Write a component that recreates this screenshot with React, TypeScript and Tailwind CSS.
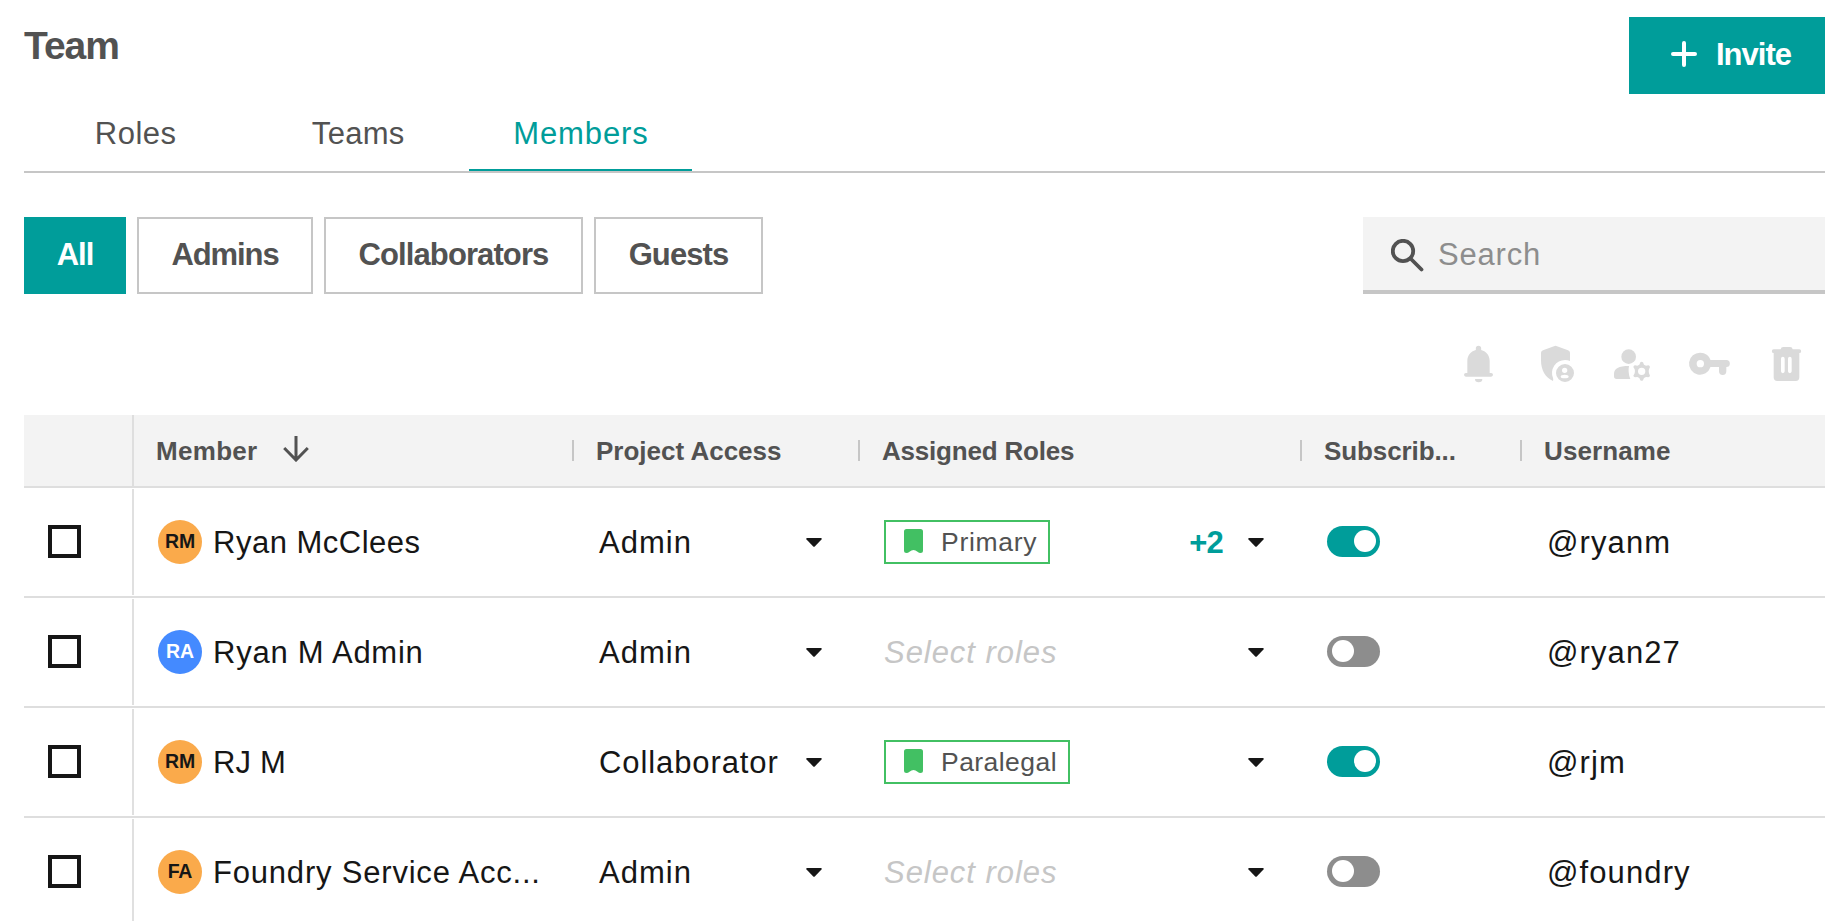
import type { ReactNode } from "react";

type Member = {
  initials: string;
  avatar: string;
  name: string;
  nameSpacing: string;
  access: string;
  accessSpacing: string;
  role?: string;
  roleClass?: string;
  more?: string;
  subscribed: boolean;
  username: string;
};

const members: Member[] = [
  { initials: "RM", avatar: "bg-[#faaa4b] text-[#161616]", name: "Ryan McClees", nameSpacing: "tracking-[0.5px]", access: "Admin", accessSpacing: "tracking-[1px]", role: "Primary", roleClass: "w-[166px] tracking-[0.7px]", more: "+2", subscribed: true, username: "@ryanm" },
  { initials: "RA", avatar: "bg-[#448aff] text-white", name: "Ryan M Admin", nameSpacing: "tracking-[0.75px]", access: "Admin", accessSpacing: "tracking-[1px]", subscribed: false, username: "@ryan27" },
  { initials: "RM", avatar: "bg-[#faaa4b] text-[#161616]", name: "RJ M", nameSpacing: "tracking-[0.2px]", access: "Collaborator", accessSpacing: "tracking-[0.9px]", role: "Paralegal", roleClass: "w-[186px] tracking-[0.45px]", subscribed: true, username: "@rjm" },
  { initials: "FA", avatar: "bg-[#faaa4b] text-[#161616]", name: "Foundry Service Acc...", nameSpacing: "tracking-[0.8px]", access: "Admin", accessSpacing: "tracking-[1px]", subscribed: false, username: "@foundry" },
];

const columns = "grid grid-cols-[110px_438px_286px_442px_220px_305px]";

function ToolIcon({ children }: { children: ReactNode }) {
  return (
    <svg viewBox="0 0 231 210" className="h-[70px] w-[77px]" fill="#dadada">
      {children}
    </svg>
  );
}

function Toolbar() {
  return (
    <div className="flex h-[70px] justify-end">
      <ToolIcon>
        <path d="M115.500 47a8 8 0 0 1 8 8v5c16 4 25.500 17 25.500 33v36h4.500a5.500 5.500 0 0 1 0 11h-76a5.500 5.500 0 0 1 0-11H82V93c0-16 9.500-29 25.500-33v-5a8 8 0 0 1 8-8z" />
        <path d="M105 147h22a11 10 0 0 1-22 0z" />
      </ToolIcon>
      <ToolIcon>
        <path d="M111 48.500q4.500-2 9 0l33 12q6 2.500 6 8V93q-6-3-15-3a39 39 0 0 0-36 54q1.500 5 0 9c-22-9-36-32-36-62V68.500q0-5.500 6-8z" />
        <path fillRule="evenodd" d="M144 102a27 27 0 1 0 0 54 27 27 0 0 0 0-54zM143 113a8 8 0 1 1 0 16 8 8 0 0 1 0-16zM143 134.500c7 0 12 2.500 12 5.500s-5 5-12 5-12-2-12-5 5-5.500 12-5.500z" />
      </ToolIcon>
      <ToolIcon>
        <circle cx="104" cy="80" r="22" />
        <path d="M60 132c0-16 14-24 45-24q-4 19 4 39H68q-8 0-8-8z" />
        <path
          fillRule="evenodd"
          d="M139 97q4-3 8 0l3 7 6 3 7-1q4 1 5 5l-3 7q-2 6 0 12l3 7q-1 4-5 5l-7-1-6 3-3 7q-4 3-8 0l-3-7-6-3-7 1q-4-1-5-5l4-7q2-6 0-12l-4-7q1-4 5-5l7 1 6-3zM143 113a11 11 0 1 0 0 22 11 11 0 0 0 0-22z"
        />
      </ToolIcon>
      <ToolIcon>
        <path fillRule="evenodd" d="M88 68c15 0 26 9 30.500 22H166a10.500 10.500 0 0 1 0 21v13a11 11 0 0 1-22 0v-13h-25.500A33 33 0 1 1 88 68zM88 90a11 11 0 1 0 0 22 11 11 0 0 0 0-22z" />
      </ToolIcon>
      <ToolIcon>
        <path fillRule="evenodd" d="M98 58q1-7 8-7h20q7 0 8 7h20a5.500 5.500 0 0 1 0 11v73q0 11-11 11H88q-11 0-11-11V69a5.500 5.500 0 0 1 0-11zM99 86v38a5.500 5.500 0 0 0 11 0V86a5.500 5.500 0 0 0-11 0zM120 86v38a5.500 5.500 0 0 0 11 0V86a5.500 5.500 0 0 0-11 0z" />
      </ToolIcon>
    </div>
  );
}

function Caret() {
  return (
    <svg viewBox="0 0 16 9" className="mt-px h-[9px] w-4 shrink-0" fill="#161616">
      <path d="M1.200 0h13.600q1.500.2.700 1.400L9 8.300q-1 1-2 0L.5 1.400Q-.3.2 1.200 0z" />
    </svg>
  );
}

function HeaderCell({ children, className }: { children: ReactNode; className: string }) {
  return (
    <div className="flex items-center">
      <span className="h-[21px] w-[2px] bg-[#c6c6c6]" />
      <span className={className}>{children}</span>
    </div>
  );
}

function MemberRow({ m }: { m: Member }) {
  return (
    <div className={`${columns} h-[110px] border-b-2 border-[#dedede] text-[31px] whitespace-nowrap text-[#161616]`}>
      <div className="my-px flex items-center border-r-2 border-[#e0e0e0] pl-6">
        <span className="mb-[2px] h-[33px] w-[33px] border-4 border-[#161616]" />
      </div>
      <div className="flex items-center pl-6">
        <span className={`flex h-11 w-11 items-center justify-center rounded-full pb-px text-[19.500px] font-bold tracking-[-0.2px] ${m.avatar}`}>{m.initials}</span>
        <span className={`pt-[2px] pl-[11px] ${m.nameSpacing}`}>{m.name}</span>
      </div>
      <div className="flex items-center justify-between pr-9 pl-[27px]">
        <span className={`pt-[2px] ${m.accessSpacing}`}>{m.access}</span>
        <Caret />
      </div>
      <div className="flex items-center pr-9 pl-[26px]">
        {m.role ? (
          <span className={`flex h-11 items-center border-2 border-[#42c063] pl-[18px] text-[26.500px] text-[#525252] ${m.roleClass}`}>
            <svg viewBox="0 0 19 24" className="mb-[3px] h-6 w-[19px]" fill="#42c063">
              <path d="M2.500 0h14Q19 0 19 2.500v19q0 2.500-2.500 2.500-1.500 0-3-1.200-2-1.800-4-1.800t-4 1.800Q4 24 2.500 24 0 24 0 21.500v-19Q0 0 2.500 0z" />
            </svg>
            <span className="pt-px pl-[18px]">{m.role}</span>
          </span>
        ) : (
          <span className="pt-[2px] tracking-[0.95px] text-[#c6c6c6] italic">Select roles</span>
        )}
        <span className="ml-auto pt-[2px] pr-[25px] font-bold tracking-[-0.8px] text-[#009d9a]">{m.more}</span>
        <Caret />
      </div>
      <div className="flex items-center pl-[27px]">
        <span className={`mb-[2px] flex h-[31px] w-[53px] items-center rounded-full pr-1 pl-[5px] ${m.subscribed ? "justify-end bg-[#009d9a]" : "justify-start bg-[#8d8d8d]"}`}>
          <span className="h-[22px] w-[22px] rounded-full bg-white" />
        </span>
      </div>
      <div className="flex items-center pl-[27px]">
        <span className="pt-[2px] tracking-[1.1px]">{m.username}</span>
      </div>
    </div>
  );
}

export default function App() {
  return (
    <div className="h-[921px] w-[1847px] overflow-hidden bg-white pr-[22px] pl-6 font-['Liberation_Sans',sans-serif] text-[#525252]">
      <header className="flex h-[94px] items-start justify-between pt-[17px]">
        <h1 className="pt-[6px] text-[39px] leading-[46px] font-bold tracking-[-1px]">Team</h1>
        <button className="flex h-[77px] w-[196px] items-center bg-[#009d9a] pl-[42px] text-[31px] font-bold tracking-[-1px] text-white">
          <svg viewBox="0 0 26 26" className="mb-[3px] h-[26px] w-[26px]" fill="none" stroke="currentColor" strokeWidth="4" strokeLinecap="round">
            <path d="M13 2v22M2 13h22" />
          </svg>
          <span className="pb-px pl-[19px]">Invite</span>
        </button>
      </header>

      <nav className="flex h-[79px] border-b-2 border-[#c6c6c6] text-[31px] leading-[80px]">
        <a className="h-[77px] w-[222.500px] border-b-2 border-transparent pl-px text-center tracking-[0.5px]">Roles</a>
        <a className="h-[77px] w-[222.500px] border-b-2 border-transparent pl-px text-center tracking-[0.3px]">Teams</a>
        <a className="h-[77px] w-[223px] border-b-2 border-[#009d9a] pl-px text-center tracking-[0.9px] text-[#009d9a]">Members</a>
      </nav>

      <div className="mt-11 flex h-[77px] justify-between text-[31px] leading-none">
        <div className="flex gap-[11px] font-bold">
          <button className="w-[102px] bg-[#009d9a] pb-[3px] tracking-[-1px] text-white">All</button>
          <button className="w-44 border-2 border-[#c6c6c6] pb-[3px] tracking-[-1.1px]">Admins</button>
          <button className="w-[259px] border-2 border-[#c6c6c6] pb-[3px] tracking-[-0.9px]">Collaborators</button>
          <button className="w-[169px] border-2 border-[#c6c6c6] pb-[3px] tracking-[-0.9px]">Guests</button>
        </div>
        <div className="flex w-[462px] items-center border-b-4 border-[#c6c6c6] bg-[#f3f3f3] pl-7">
          <svg viewBox="0 0 33 33" className="mt-[4px] h-[33px] w-[33px]" fill="none" stroke="#525252" strokeWidth="3.800" strokeLinecap="round">
            <circle cx="12" cy="12" r="10.200" />
            <path d="m19.500 19.500 11 11" />
          </svg>
          <span className="pt-[2px] pl-[14px] tracking-[0.8px] text-[#8d8d8d]">Search</span>
        </div>
      </div>

      <div className="mt-9">
        <Toolbar />
      </div>

      <div className="mt-[15px]">
        <div className={`${columns} h-[73px] border-b-2 border-[#dedede] bg-[#f3f3f3] text-[26px] leading-none font-bold whitespace-nowrap`}>
          <div className="border-r-2 border-[#dedede]" />
          <div className="flex items-center pl-[22px]">
            <span className="pt-px tracking-[0.3px]">Member</span>
            <svg viewBox="0 0 26 26" className="mb-[3px] ml-[25px] h-[26px] w-[26px]" fill="none" stroke="#525252" strokeWidth="3">
              <path d="M13 0v24M1.200 12 13 24l11.800-12" />
            </svg>
          </div>
          <HeaderCell className="pt-px pl-[22px] tracking-[0px]">Project Access</HeaderCell>
          <HeaderCell className="pt-px pl-[22px] tracking-[-0.2px]">Assigned Roles</HeaderCell>
          <HeaderCell className="pt-px pl-[22px] tracking-[-0.1px]">Subscrib...</HeaderCell>
          <HeaderCell className="pt-px pl-[22px] tracking-[0.1px]">Username</HeaderCell>
        </div>
        {members.map((m) => (
          <MemberRow key={m.username} m={m} />
        ))}
      </div>
    </div>
  );
}
